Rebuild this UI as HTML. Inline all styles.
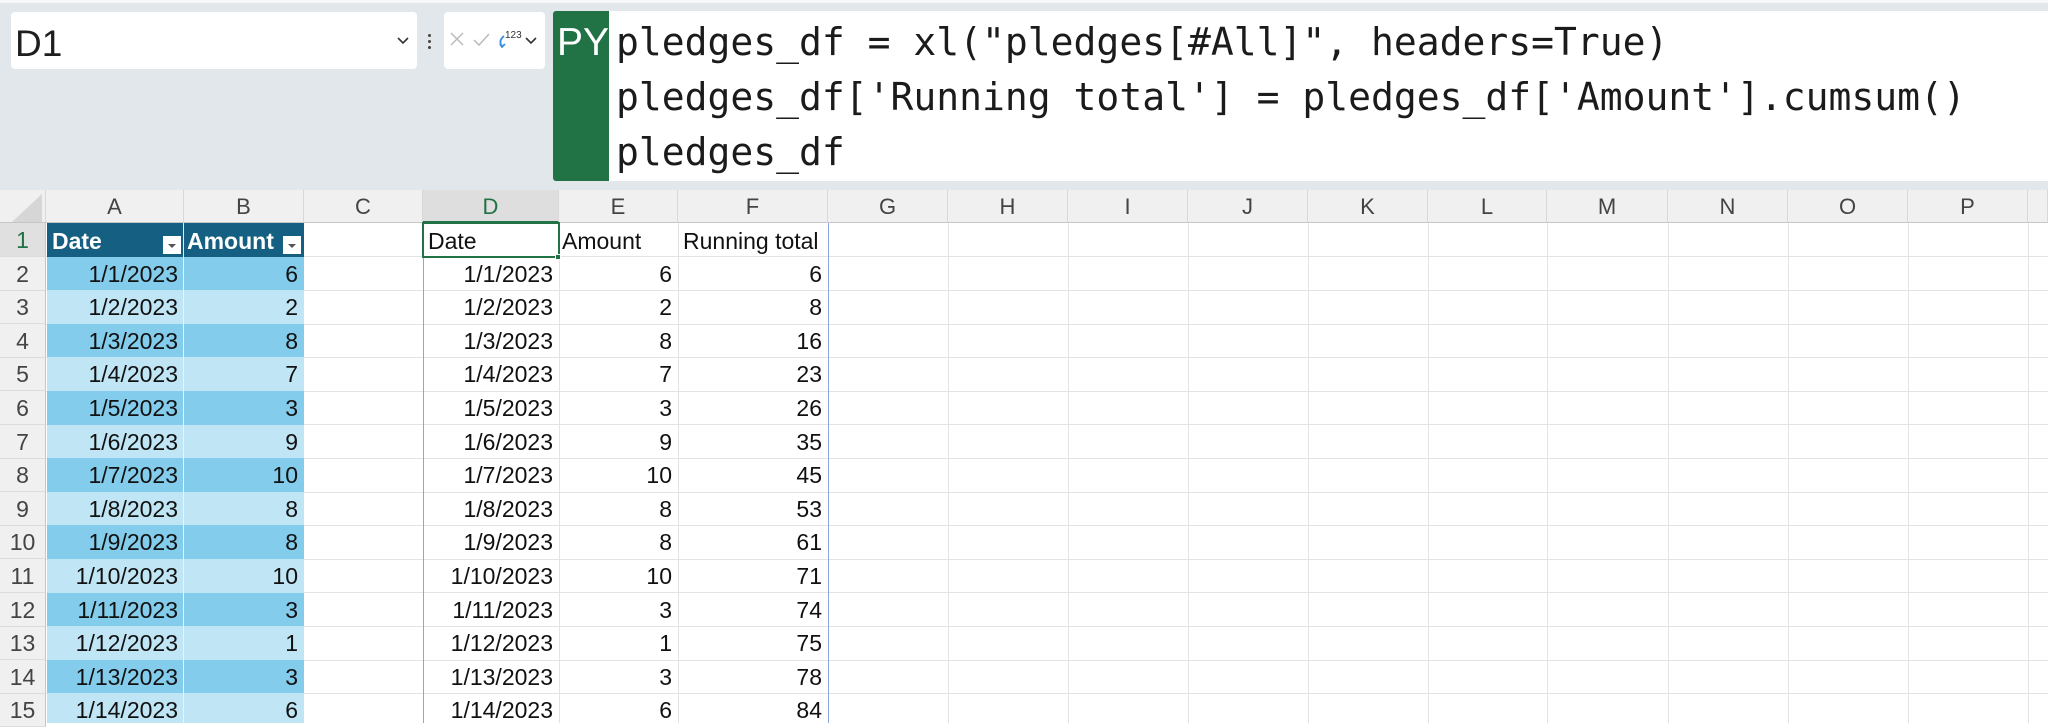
<!DOCTYPE html>
<html><head><meta charset="utf-8"><style>
*{margin:0;padding:0;box-sizing:border-box}
body{width:2048px;height:723px;overflow:hidden;background:#fff;position:relative;font-family:"Liberation Sans",sans-serif}
.a{position:absolute}
.top{left:0;top:0;width:2048px;height:190px;background:#e1e7ea;border-top:3px solid #f6f8f9}
.code{font-family:"DejaVu Sans Mono","Liberation Mono",monospace;font-size:38px;color:#1b1b1b;left:616px;white-space:pre;line-height:55px}
.ch{top:190px;height:33px;background:#f0f0f0;border-right:1px solid #d8d8d8;border-bottom:1px solid #c6c6c6;text-align:center;font-size:22px;color:#444;line-height:34px}
.rn{left:0;width:46px;background:#f0f0f0;border-bottom:1px solid #dcdcdc;border-right:1px solid #c6c6c6;text-align:center;font-size:23px;color:#444}
.c{font-size:23px;color:#111;white-space:nowrap;overflow:hidden}
.r{text-align:right;padding-right:6px}
.vl{top:223px;width:1px;height:500px;background:#e3e3e3}
.hl{left:46px;width:2002px;height:1px;background:#e3e3e3}
</style></head><body>
<div class="a top"></div>
<div class="a" style="left:11px;top:12px;width:406px;height:57px;background:#fff;border-radius:4px"></div>
<div class="a" style="left:15px;top:23px;font-size:37px;color:#1e1e1e">D1</div>
<svg class="a" style="left:396px;top:36px" width="14" height="10"><path d="M2 2 L7 7 L12 2" fill="none" stroke="#333" stroke-width="1.6"/></svg>
<div class="a" style="left:428px;top:34px;width:3px;height:3px;background:#444;border-radius:2px;box-shadow:0 6px 0 #444,0 12px 0 #444"></div>
<div class="a" style="left:444px;top:12px;width:101px;height:57px;background:#fff;border-radius:4px"></div>
<svg class="a" style="left:448px;top:30px" width="96" height="24"><path d="M3 3 L15 15 M15 3 L3 15" stroke="#bbb" stroke-width="1.5"/><path d="M26 10 L31 15 L41 4" fill="none" stroke="#bbb" stroke-width="1.5"/><path d="M56 6 Q50 11 54 16 M52 14 L54 17 L57 14" fill="none" stroke="#3a8ee6" stroke-width="1.8"/><text x="57" y="8" font-size="10" fill="#333" font-family="Liberation Sans">123</text><path d="M78 8 L83 13 L88 8" fill="none" stroke="#333" stroke-width="1.6"/></svg>
<div class="a" style="left:553px;top:11px;width:56px;height:170px;background:#217346;border-radius:3px 0 0 3px"></div>
<div class="a" style="left:557px;top:21px;font-size:39px;color:#fff">PY</div>
<div class="a" style="left:609px;top:11px;width:1439px;height:170px;background:#fff"></div>
<div class="a code" style="top:15px">pledges_df = xl("pledges[#All]", headers=True)
pledges_df['Running total'] = pledges_df['Amount'].cumsum()
pledges_df</div>

<div class="a ch" style="left:0;width:46px"></div>
<svg class="a" style="left:12px;top:194px" width="32" height="28"><path d="M30 0 L30 28 L0 28 Z" fill="#d6d6d6"/></svg>
<div class="a ch" style="left:46px;width:138px">A</div>
<div class="a ch" style="left:184px;width:120px">B</div>
<div class="a ch" style="left:304px;width:119px">C</div>
<div class="a ch" style="left:423px;width:136px;background:#dedede;color:#217346;border-bottom:2px solid #217346">D</div>
<div class="a ch" style="left:559px;width:119px">E</div>
<div class="a ch" style="left:678px;width:150px">F</div>
<div class="a ch" style="left:828px;width:120px">G</div>
<div class="a ch" style="left:948px;width:120px">H</div>
<div class="a ch" style="left:1068px;width:120px">I</div>
<div class="a ch" style="left:1188px;width:120px">J</div>
<div class="a ch" style="left:1308px;width:120px">K</div>
<div class="a ch" style="left:1428px;width:119px">L</div>
<div class="a ch" style="left:1547px;width:121px">M</div>
<div class="a ch" style="left:1668px;width:120px">N</div>
<div class="a ch" style="left:1788px;width:120px">O</div>
<div class="a ch" style="left:1908px;width:120px">P</div>
<div class="a ch" style="left:2028px;width:20px"></div>

<div class="a vl" style="left:559px"></div><div class="a vl" style="left:678px"></div><div class="a vl" style="left:828px"></div><div class="a vl" style="left:948px"></div><div class="a vl" style="left:1068px"></div><div class="a vl" style="left:1188px"></div><div class="a vl" style="left:1308px"></div><div class="a vl" style="left:1428px"></div><div class="a vl" style="left:1547px"></div><div class="a vl" style="left:1668px"></div><div class="a vl" style="left:1788px"></div><div class="a vl" style="left:1908px"></div><div class="a vl" style="left:2028px"></div>
<div class="a hl" style="top:256px"></div><div class="a hl" style="top:290px"></div><div class="a hl" style="top:324px"></div><div class="a hl" style="top:357px"></div><div class="a hl" style="top:391px"></div><div class="a hl" style="top:424px"></div><div class="a hl" style="top:458px"></div><div class="a hl" style="top:492px"></div><div class="a hl" style="top:525px"></div><div class="a hl" style="top:559px"></div><div class="a hl" style="top:592px"></div><div class="a hl" style="top:626px"></div><div class="a hl" style="top:660px"></div><div class="a hl" style="top:693px"></div>

<div class="a rn" style="top:223px;height:34px;line-height:34px;color:#217346;background:#e0e0e0">1</div>
<div class="a rn" style="top:257px;height:34px;line-height:34px">2</div>
<div class="a rn" style="top:291px;height:33px;line-height:33px">3</div>
<div class="a rn" style="top:324px;height:34px;line-height:34px">4</div>
<div class="a rn" style="top:358px;height:33px;line-height:33px">5</div>
<div class="a rn" style="top:391px;height:34px;line-height:34px">6</div>
<div class="a rn" style="top:425px;height:34px;line-height:34px">7</div>
<div class="a rn" style="top:459px;height:33px;line-height:33px">8</div>
<div class="a rn" style="top:492px;height:34px;line-height:34px">9</div>
<div class="a rn" style="top:526px;height:33px;line-height:33px">10</div>
<div class="a rn" style="top:559px;height:34px;line-height:34px">11</div>
<div class="a rn" style="top:593px;height:34px;line-height:34px">12</div>
<div class="a rn" style="top:627px;height:33px;line-height:33px">13</div>
<div class="a rn" style="top:660px;height:34px;line-height:34px">14</div>
<div class="a rn" style="top:694px;height:33px;line-height:33px">15</div>

<div class="a" style="left:47px;top:223px;width:257px;height:34px;background:#156082"></div>
<div class="a c" style="left:52px;top:223px;line-height:36px;color:#fff;font-weight:bold">Date</div>
<div class="a" style="left:163px;top:236px;width:18px;height:18px;background:#fff"></div><svg class="a" style="left:167px;top:243px" width="10" height="6"><path d="M1 1 L5 5 L9 1Z" fill="#555"/></svg>
<div class="a c" style="left:187px;top:223px;line-height:36px;color:#fff;font-weight:bold">Amount</div>
<div class="a" style="left:283px;top:236px;width:18px;height:18px;background:#fff"></div><svg class="a" style="left:287px;top:243px" width="10" height="6"><path d="M1 1 L5 5 L9 1Z" fill="#555"/></svg>
<div class="a" style="left:183px;top:223px;width:1px;height:500px;background:#d7eef8"></div>

<div class="a" style="left:47px;top:257px;width:257px;height:466px;background:
linear-gradient(#83cceb 0 33px,#c0e6f5 33px 67px,#83cceb 67px 100px,#c0e6f5 100px 134px,#83cceb 134px 168px,#c0e6f5 168px 201px,#83cceb 201px 235px,#c0e6f5 235px 268px,#83cceb 268px 302px,#c0e6f5 302px 336px,#83cceb 336px 369px,#c0e6f5 369px 403px,#83cceb 403px 436px,#c0e6f5 436px 470px)"></div>
<div class="a" style="left:183px;top:257px;width:1px;height:466px;background:#e4f4fb"></div>

<div class="a c r" style="left:47px;top:257px;width:137px;line-height:34px">1/1/2023</div><div class="a c r" style="left:184px;top:257px;width:120px;line-height:34px">6</div>
<div class="a c r" style="left:47px;top:291px;width:137px;line-height:33px">1/2/2023</div><div class="a c r" style="left:184px;top:291px;width:120px;line-height:33px">2</div>
<div class="a c r" style="left:47px;top:324px;width:137px;line-height:34px">1/3/2023</div><div class="a c r" style="left:184px;top:324px;width:120px;line-height:34px">8</div>
<div class="a c r" style="left:47px;top:358px;width:137px;line-height:33px">1/4/2023</div><div class="a c r" style="left:184px;top:358px;width:120px;line-height:33px">7</div>
<div class="a c r" style="left:47px;top:391px;width:137px;line-height:34px">1/5/2023</div><div class="a c r" style="left:184px;top:391px;width:120px;line-height:34px">3</div>
<div class="a c r" style="left:47px;top:425px;width:137px;line-height:34px">1/6/2023</div><div class="a c r" style="left:184px;top:425px;width:120px;line-height:34px">9</div>
<div class="a c r" style="left:47px;top:459px;width:137px;line-height:33px">1/7/2023</div><div class="a c r" style="left:184px;top:459px;width:120px;line-height:33px">10</div>
<div class="a c r" style="left:47px;top:492px;width:137px;line-height:34px">1/8/2023</div><div class="a c r" style="left:184px;top:492px;width:120px;line-height:34px">8</div>
<div class="a c r" style="left:47px;top:526px;width:137px;line-height:33px">1/9/2023</div><div class="a c r" style="left:184px;top:526px;width:120px;line-height:33px">8</div>
<div class="a c r" style="left:47px;top:559px;width:137px;line-height:34px">1/10/2023</div><div class="a c r" style="left:184px;top:559px;width:120px;line-height:34px">10</div>
<div class="a c r" style="left:47px;top:593px;width:137px;line-height:34px">1/11/2023</div><div class="a c r" style="left:184px;top:593px;width:120px;line-height:34px">3</div>
<div class="a c r" style="left:47px;top:627px;width:137px;line-height:33px">1/12/2023</div><div class="a c r" style="left:184px;top:627px;width:120px;line-height:33px">1</div>
<div class="a c r" style="left:47px;top:660px;width:137px;line-height:34px">1/13/2023</div><div class="a c r" style="left:184px;top:660px;width:120px;line-height:34px">3</div>
<div class="a c r" style="left:47px;top:694px;width:137px;line-height:33px">1/14/2023</div><div class="a c r" style="left:184px;top:694px;width:120px;line-height:33px">6</div>

<div class="a" style="left:423px;top:223px;width:406px;height:500px;border-left:1px solid #8aa6dc;border-right:1px solid #8aa6dc"></div>
<div class="a" style="left:422px;top:222px;width:138px;height:36px;border:2px solid #217346"></div>
<div class="a" style="left:555px;top:254px;width:6px;height:6px;background:#217346;border:1px solid #fff"></div>
<div class="a c" style="left:428px;top:223px;line-height:36px">Date</div>
<div class="a c" style="left:562px;top:223px;line-height:36px">Amount</div>
<div class="a c" style="left:683px;top:223px;line-height:36px">Running total</div>

<div class="a c r" style="left:423px;top:257px;width:136px;line-height:34px">1/1/2023</div><div class="a c r" style="left:559px;top:257px;width:119px;line-height:34px">6</div><div class="a c r" style="left:678px;top:257px;width:150px;line-height:34px">6</div>
<div class="a c r" style="left:423px;top:291px;width:136px;line-height:33px">1/2/2023</div><div class="a c r" style="left:559px;top:291px;width:119px;line-height:33px">2</div><div class="a c r" style="left:678px;top:291px;width:150px;line-height:33px">8</div>
<div class="a c r" style="left:423px;top:324px;width:136px;line-height:34px">1/3/2023</div><div class="a c r" style="left:559px;top:324px;width:119px;line-height:34px">8</div><div class="a c r" style="left:678px;top:324px;width:150px;line-height:34px">16</div>
<div class="a c r" style="left:423px;top:358px;width:136px;line-height:33px">1/4/2023</div><div class="a c r" style="left:559px;top:358px;width:119px;line-height:33px">7</div><div class="a c r" style="left:678px;top:358px;width:150px;line-height:33px">23</div>
<div class="a c r" style="left:423px;top:391px;width:136px;line-height:34px">1/5/2023</div><div class="a c r" style="left:559px;top:391px;width:119px;line-height:34px">3</div><div class="a c r" style="left:678px;top:391px;width:150px;line-height:34px">26</div>
<div class="a c r" style="left:423px;top:425px;width:136px;line-height:34px">1/6/2023</div><div class="a c r" style="left:559px;top:425px;width:119px;line-height:34px">9</div><div class="a c r" style="left:678px;top:425px;width:150px;line-height:34px">35</div>
<div class="a c r" style="left:423px;top:459px;width:136px;line-height:33px">1/7/2023</div><div class="a c r" style="left:559px;top:459px;width:119px;line-height:33px">10</div><div class="a c r" style="left:678px;top:459px;width:150px;line-height:33px">45</div>
<div class="a c r" style="left:423px;top:492px;width:136px;line-height:34px">1/8/2023</div><div class="a c r" style="left:559px;top:492px;width:119px;line-height:34px">8</div><div class="a c r" style="left:678px;top:492px;width:150px;line-height:34px">53</div>
<div class="a c r" style="left:423px;top:526px;width:136px;line-height:33px">1/9/2023</div><div class="a c r" style="left:559px;top:526px;width:119px;line-height:33px">8</div><div class="a c r" style="left:678px;top:526px;width:150px;line-height:33px">61</div>
<div class="a c r" style="left:423px;top:559px;width:136px;line-height:34px">1/10/2023</div><div class="a c r" style="left:559px;top:559px;width:119px;line-height:34px">10</div><div class="a c r" style="left:678px;top:559px;width:150px;line-height:34px">71</div>
<div class="a c r" style="left:423px;top:593px;width:136px;line-height:34px">1/11/2023</div><div class="a c r" style="left:559px;top:593px;width:119px;line-height:34px">3</div><div class="a c r" style="left:678px;top:593px;width:150px;line-height:34px">74</div>
<div class="a c r" style="left:423px;top:627px;width:136px;line-height:33px">1/12/2023</div><div class="a c r" style="left:559px;top:627px;width:119px;line-height:33px">1</div><div class="a c r" style="left:678px;top:627px;width:150px;line-height:33px">75</div>
<div class="a c r" style="left:423px;top:660px;width:136px;line-height:34px">1/13/2023</div><div class="a c r" style="left:559px;top:660px;width:119px;line-height:34px">3</div><div class="a c r" style="left:678px;top:660px;width:150px;line-height:34px">78</div>
<div class="a c r" style="left:423px;top:694px;width:136px;line-height:33px">1/14/2023</div><div class="a c r" style="left:559px;top:694px;width:119px;line-height:33px">6</div><div class="a c r" style="left:678px;top:694px;width:150px;line-height:33px">84</div>
</body></html>
